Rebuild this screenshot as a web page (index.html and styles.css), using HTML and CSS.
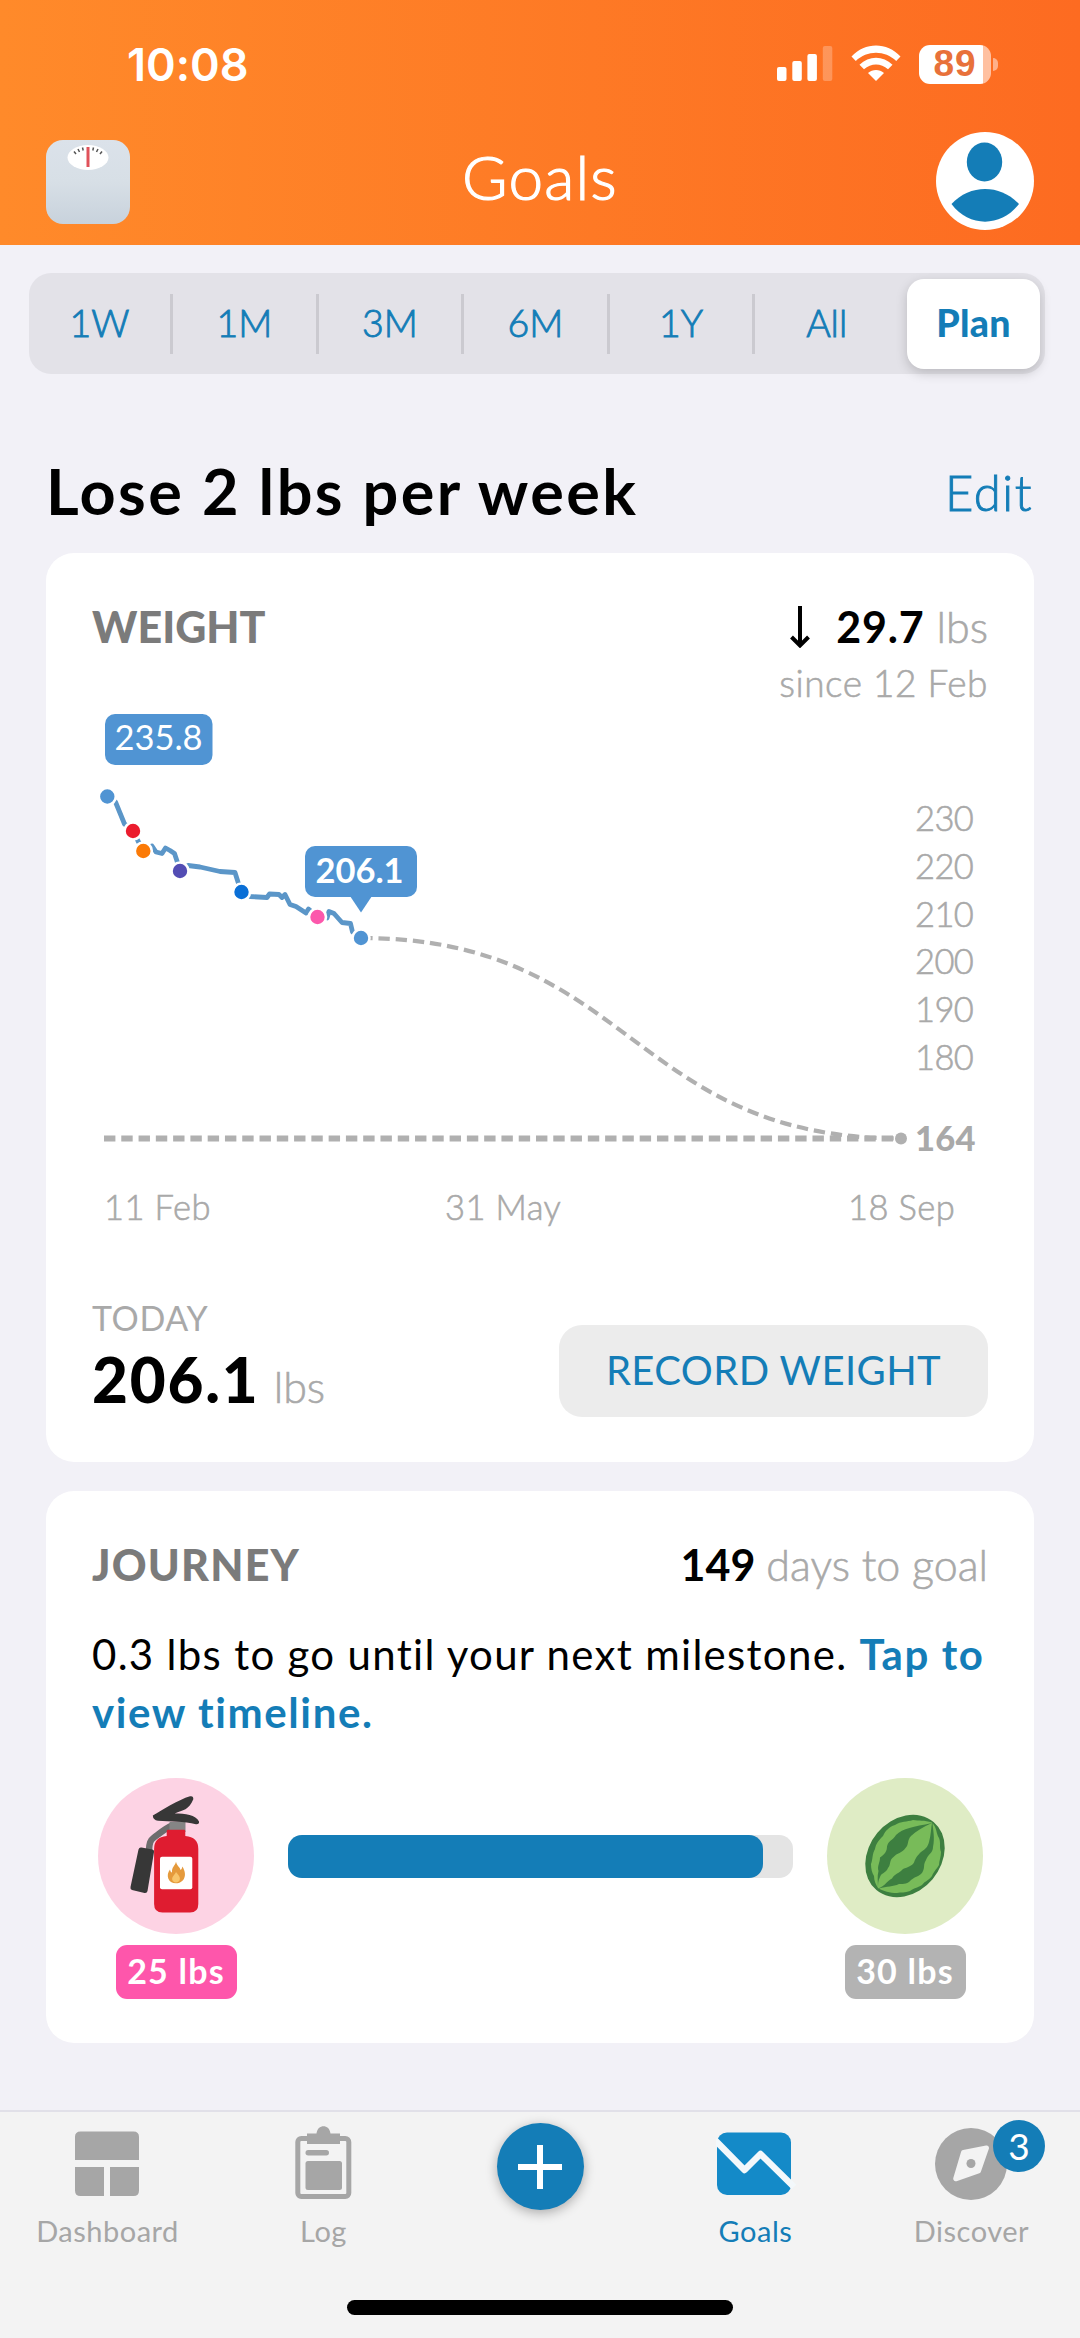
FILE: index.html
```html
<!DOCTYPE html>
<html lang="en">

<head>
    <meta charset="UTF-8">
    <meta name="viewport" content="width=device-width, initial-scale=1.0">
    <title>Goals</title>
    <link rel="stylesheet" href="styles.css">
</head>

<body>
    <header class="header">
        <div class="status-bar">
            <span class="time">10:08</span>
            <div class="status-icons">
                <svg class="signal" width="56" height="36" viewBox="0 0 56 36">
                    <rect x="0" y="21" width="9.5" height="14" rx="2" />
                    <rect x="15.3" y="15" width="9.5" height="20" rx="2" />
                    <rect x="30.4" y="8" width="9.5" height="27" rx="2" />
                    <rect x="45.8" y="0" width="9.5" height="35" rx="2" opacity="0.25" />
                </svg>
                <svg class="wifi" width="50" height="36" viewBox="0 0 50 36">
                    <path d="M0.5 11.5 C14 -3.3 36 -3.3 49.5 11.5 L45.2 16 C34 5 16 5 4.8 16 Z" />
                    <path d="M8.5 19.7 C18 10.5 32 10.5 41.5 19.7 L37 24.2 C30 17.8 20 17.8 13 24.2 Z" />
                    <path d="M17 28 C21.5 24 28.5 24 33 28 L25 36 Z" />
                </svg>
                <div class="battery">
                    <span class="battery-level">89</span>
                </div>
            </div>
        </div>
        <div class="title-bar">
            <svg class="scale-icon" width="84" height="84" viewBox="0 0 84 84">
                <defs>
                    <linearGradient id="scale-fill" x1="0" y1="0" x2="0" y2="1">
                        <stop offset="0" stop-color="#dbe2ea" />
                        <stop offset="0.5" stop-color="#d7dfe6" />
                        <stop offset="1" stop-color="#c8d2dc" />
                    </linearGradient>
                </defs>
                <rect width="84" height="84" rx="17" fill="url(#scale-fill)" />
                <ellipse cx="42" cy="17.5" rx="20.5" ry="12.5" fill="#fff" />
                <path d="M28 11.5l2 2.5M32 9l1.5 3M36.5 7.5l.7 3M47.5 7.5l-.7 3M52 9l-1.5 3M56 11.5l-2 2.5" stroke="#555" stroke-width="1.5" />
                <path d="M42 7V27" stroke="#e0525a" stroke-width="3" />
            </svg>
            <h1>Goals</h1>
            <svg class="avatar" width="98" height="98" viewBox="0 0 98 98">
                <circle cx="49" cy="49" r="49" fill="#fff" />
                <ellipse cx="48.5" cy="30" rx="17.7" ry="19.5" />
                <path d="M15.5 72 C34 52 64 52 83 72 C65 95.5 33 95.5 15.5 72 Z" />
            </svg>
        </div>
    </header>

    <nav class="range">
        <span>1W</span>
        <span>1M</span>
        <span>3M</span>
        <span>6M</span>
        <span>1Y</span>
        <span>All</span>
        <span class="selected">Plan</span>
    </nav>

    <main>
        <div class="goal">
            <h2>Lose 2 lbs per week</h2>
            <a class="edit">Edit</a>
        </div>

        <section class="card weight">
            <div class="card-top">
                <h3>WEIGHT</h3>
                <div class="change">
                    <svg width="20" height="42" viewBox="0 0 20 42">
                        <path d="M10 0V39M1.5 31L10 39.5L18.5 31" />
                    </svg>
                    <strong>29.7</strong>
                    <span>lbs</span>
                </div>
            </div>
            <p class="since">since 12 Feb</p>

            <svg class="chart" width="895" height="533" viewBox="93 707 895 533">
                <path class="target" d="M104 1138.5H901" />
                <path class="projection" d="M361 938C631 938 631 1138.5 901 1138.5" />
                <circle class="end" cx="901" cy="1138.5" r="6" />

                <path class="history" d="M107 796L115.5 802L124.5 824L133 830.5L138 841L143.3 850.4L152 846L156 852L162 853.5L165.5 848L170 850.5L174.5 853.5L177 861L180 870.5M180 870.5L188 865.5L200 867L220 871.5L235 872.5L238 882L241.5 891.5L250 896.5L267 897.5L269.5 894L279 894.5L282 897.5L285 894.5L290 904.5L296 906.5L306 913L308.5 909L317.5 916.5L327 918L329 911.5L334 913.5L342 922.5L350.5 923.5L352.5 932L361 937.5" />
                <g class="points">
                    <circle cx="107.3" cy="796.5" r="8.5" fill="#5094d3" />
                    <circle cx="133" cy="831" r="8.5" fill="#eb1c2e" />
                    <circle cx="143.3" cy="851" r="8.5" fill="#fb7a07" />
                    <circle cx="180" cy="871" r="8.5" fill="#534db4" />
                    <circle cx="241.5" cy="892" r="8.5" fill="#0a6fd6" />
                    <circle cx="317.5" cy="917" r="8.5" fill="#fc58ac" />
                    <circle cx="361" cy="938" r="8.5" fill="#5094d3" />
                </g>

                <rect class="tag" x="105" y="714" width="107.5" height="51" rx="10" />
                <text class="tag-text" x="158.5" y="750">235.8</text>
                <rect class="tag" x="305" y="846" width="112" height="51" rx="10" />
                <path class="tag" d="M350 896H372L361 912.5Z" />
                <text class="tag-text bold" x="359.5" y="882.5">206.1</text>

                <g class="axis">
                    <text x="915" y="831">230</text>
                    <text x="915" y="879">220</text>
                    <text x="915" y="927">210</text>
                    <text x="915" y="974">200</text>
                    <text x="915" y="1022">190</text>
                    <text x="915" y="1070">180</text>
                    <text class="bold" x="915" y="1150.5">164</text>
                    <text class="date" x="104" y="1219.5">11 Feb</text>
                    <text class="date" x="445" y="1219.5">31 May</text>
                    <text class="date" x="848" y="1219.5">18 Sep</text>
                </g>
            </svg>

            <div class="today">
                <div class="today-value">
                    <p>TODAY</p>
                    <div><strong>206.1</strong> <span>lbs</span></div>
                </div>
                <button class="record">RECORD WEIGHT</button>
            </div>
        </section>

        <section class="card journey">
            <div class="card-top">
                <h3>JOURNEY</h3>
                <div class="days"><strong>149</strong> <span>days to goal</span></div>
            </div>
            <p class="milestone">0.3 lbs to go until your next milestone. <a>Tap to<br>view timeline.</a></p>
            <div class="progress-row">
                <div class="badge">
                    <svg width="156" height="156" viewBox="0 0 156 156">
                        <circle cx="78" cy="78" r="78" fill="#fdd3e4" />
                        <path d="M80 47.5H74C68 50 62 55 56 59.5C52 62.5 51.5 65 51 72" fill="none" stroke="#6d6d6d" stroke-width="6.5" />
                        <rect x="71.5" y="44" width="16" height="10" fill="#858585" />
                        <path d="M68.7 58V53Q68.7 51.8 70 51.8H86Q87.3 51.8 87.3 53V58Q100.3 59 100.3 71V126Q100.3 134.5 92 134.5H64.5Q56.1 134.5 56.1 126V71Q56.1 59 68.7 58Z" fill="#df1c30" />
                        <rect x="62" y="78.7" width="32.3" height="32.6" rx="2" fill="#fff" />
                        <path d="M78 83.7C79 88 82 89 82.5 92C84 91 84 90 84.3 88.5C90 97 86 105.3 78 105.3C70 105.3 67.5 97 72 91.5C72.5 94 73 94 74 94.5C73.5 89 77 88 78 83.7Z" fill="#e59a3c" />
                        <path d="M78 94C80 97 83 99 81.5 102.5C80 105 76 105 74.5 102.5C73 99 77 97 78 94Z" fill="#f8c56c" />
                        <path d="M43.5 69.5L54.5 71.5Q56.5 72 56 74L49.5 113Q49 115.5 46.5 115L34 112Q32 111.5 32.5 109L40.5 71.5Q41.2 69 43.5 69.5Z" fill="#373737" />
                        <path d="M54.8 37.5C66 31 80 22 92 18.3Q95.5 17.5 95.3 21.2C91 32 85 32 76.7 35.5C87 35.5 98 37 101 43.5Q101.5 46.5 98 46.2C86 43 72 44 60 42.8Q55 42 54.8 37.5Z" fill="#373737" />
                    </svg>
                    <span class="chip pink">25 lbs</span>
                </div>
                <div class="bar">
                    <div class="bar-fill" style="width: 94%"></div>
                </div>
                <div class="badge">
                    <svg width="156" height="156" viewBox="0 0 156 156">
                        <circle cx="78" cy="78" r="78" fill="#dfecc5" />
                        <ellipse cx="78" cy="78" rx="44.5" ry="36" transform="rotate(-50 78 78)" fill="#3d7f40" />
                        <g fill="#78bb59">
                            <path d="M105 44.5C97 42 92 43 86 42C80 44 74 43 68 47C62 49 58 53 56 58C51 63 49 66 48 71C45 76 46 81 44 86C44 91 45 95 47 98C47 103 49 107 51 110C51 104 50 98 51.5 93C50 88 53 85 53 79.5C58 76 60 73 60 68.5C61 63 66 62 69 57C76 50 86 49 105 45Z" />
                            <path d="M105 45C96 49 89 53 84 58C80 62 82 67 78.5 70C75 75 70 75 66.5 79C62 82 64 87 61 90C59 95 54 95 53 99C51 103 51 106 51 110.5C58 108 60 103 65 100.5C68 95 72 96 76 91C81 89 85 88 87 84.5C89 79 91 77 94 74C99 71 101 68 102 64C104 57 104 50 105 45Z" />
                            <path d="M105.5 45C110 50 109 55 112 60C114 65 112 69 114 74C114 79 112 83 112 87C109 92 107 93 105 98C101 103 98 103 95 107C90 110 87 110 83 113C78 115 74 114 70 115C63 115 56 113 52 110.5C60 108 66 109 72 106C77 106 81 106 84 102C89 98 94 98 96 93C98 89 96 87 99 82C101 76 106 75 106 69C108 60 106 52 105.5 45Z" />
                        </g>
                    </svg>
                    <span class="chip gray">30 lbs</span>
                </div>
            </div>
        </section>
    </main>

    <footer class="tab-bar">
        <nav class="tabs">
            <div class="tab">
                <svg width="80" height="80" viewBox="0 0 80 80">
                    <path d="M7 40V17Q7 11.5 12.5 11.5H65.5Q71 11.5 71 17V40ZM7 47H36V76H12.5Q7 76 7 70.5ZM42 47H71V70.5Q71 76 65.5 76H42Z" />
                </svg>
                <span>Dashboard</span>
            </div>
            <div class="tab">
                <svg width="80" height="80" viewBox="0 0 80 80">
                    <rect x="13.8" y="18.5" width="51" height="58" rx="3.5" fill="none" stroke="currentColor" stroke-width="5" />
                    <path d="M23 13.5H32.5C33.5 3.7 45.5 3.7 46.5 13.5H56V24H23Z" />
                    <rect x="21.5" y="30" width="23.5" height="5.5" rx="2.7" />
                    <rect x="21.5" y="41" width="36.5" height="29" rx="2.5" />
                </svg>
                <span>Log</span>
            </div>
            <div class="tab">
                <button class="add">
                    <svg width="44" height="44" viewBox="0 0 44 44">
                        <path d="M22 0V44M0 22H44" stroke="#fff" stroke-width="6" />
                    </svg>
                </button>
            </div>
            <div class="tab active">
                <svg width="80" height="80" viewBox="0 0 80 80">
                    <rect x="1" y="12.5" width="74" height="62.5" rx="10" fill="#148ac8" />
                    <path d="M-1 20L28.5 50L44.5 34L78 67" fill="none" stroke="#f3f8fb" stroke-width="6.5" stroke-linejoin="round" />
                </svg>
                <span>Goals</span>
            </div>
            <div class="tab">
                <svg width="80" height="80" viewBox="0 0 80 80">
                    <circle cx="39" cy="44" r="36" />
                    <path d="M31.5 32.5L54.5 28L46.5 51L23.7 58.8Z" fill="#f3f3f3" stroke="#f3f3f3" stroke-width="5" stroke-linejoin="round" />
                    <circle cx="39" cy="43.5" r="4.5" />
                </svg>
                <span>Discover</span>
                <b class="count">3</b>
            </div>
        </nav>
        <div class="home-indicator"></div>
    </footer>
</body>

</html>
```

FILE: styles.css
```css
* {
    box-sizing: border-box;
}

body {
    margin: 0;
    width: 1080px;
    height: 2338px;
    display: flex;
    flex-direction: column;
    overflow: hidden;
    background-color: #f2f1f7;
    font-family: Lato, "Liberation Sans", sans-serif;
    font-variant-ligatures: none;
    color: #000;
}

h1,
h2,
h3,
p {
    margin: 0;
}

svg {
    display: block;
}

button {
    border: none;
    padding: 0;
    font-family: inherit;
}

/* header */

.header {
    height: 245px;
    flex: none;
    padding-top: 45px;
    background: linear-gradient(90deg, #ff8a2a, #fd6b21);
    color: #fff;
}

.status-bar {
    display: flex;
    justify-content: space-between;
    align-items: flex-start;
    height: 87px;
    padding: 0 82px 0 127px;
}

.time {
    font-family: Inter, sans-serif;
    font-size: 45px;
    font-weight: 600;
    line-height: 40px;
}

.status-icons {
    display: flex;
    fill: #fff;
}

.signal {
    margin: 1px 18px 0 0;
}

.wifi {
    margin: 0 18px 0 0;
}

.battery {
    position: relative;
    width: 72px;
    height: 39px;
    margin-right: 7px;
    border-radius: 11px;
    background: linear-gradient(90deg, #fff 64px, #ffc0a0 64px);
    text-align: center;
}

.battery::after {
    content: "";
    position: absolute;
    left: 74px;
    top: 13px;
    width: 5px;
    height: 13px;
    border-radius: 0 6px 6px 0;
    background-color: #ffb08a;
}

.battery-level {
    font-family: "Liberation Sans", sans-serif;
    font-size: 37px;
    font-weight: 700;
    letter-spacing: 1px;
    line-height: 38px;
    color: #e8713a;
}

.title-bar {
    display: grid;
    grid-template-columns: 1fr auto 1fr;
    align-items: center;
    height: 98px;
    padding: 0 46px;
}

.scale-icon {
    margin-top: 2px;
}

.title-bar h1 {
    padding-bottom: 11px;
    font-size: 62px;
    font-weight: 300;
    letter-spacing: 1.2px;
    line-height: 70px;
    -webkit-text-stroke: 1.2px #fff;
}

.avatar {
    justify-self: end;
    fill: #147db7;
}

/* time range */

.range {
    display: grid;
    grid-template-columns: 144px repeat(5, 145.6px) 1fr;
    align-items: center;
    flex: none;
    width: 1016px;
    height: 101px;
    margin: 28px 0 0 29px;
    border-radius: 22px;
    background-color: #e3e2e8;
    color: #147db7;
    font-size: 37.5px;
    font-weight: 300;
    line-height: 57px;
    text-align: center;
    -webkit-text-stroke: 0.9px #147db7;
}

.range span {
    height: 60px;
    border-right: 3px solid #cbcad0;
}

.range span:nth-child(6) {
    padding-right: 3px;
    border-right: none;
}

.range .selected {
    height: 90px;
    margin: 0 5px 0 6px;
    border: none;
    border-radius: 17px;
    background-color: #fff;
    box-shadow: 0 4px 12px rgba(0, 0, 0, 0.18);
    font-weight: 900;
    letter-spacing: 0.3px;
    line-height: 87px;
    -webkit-text-stroke: 0;
}

/* goal heading */

main {
    flex: 1;
    padding: 0 46px;
}

.goal {
    display: flex;
    justify-content: space-between;
    height: 80px;
    margin: 77px 1px 22px 0;
}

.goal h2 {
    font-size: 63px;
    font-weight: 700;
    letter-spacing: 2.4px;
    line-height: 80px;
}

.edit {
    color: #147db7;
    font-size: 49px;
    font-weight: 300;
    letter-spacing: 1.5px;
    line-height: 82px;
    -webkit-text-stroke: 0.9px #147db7;
}

/* cards */

.card {
    width: 988px;
    padding: 49px 46px 46px 46px;
    border-radius: 28px;
    background-color: #fff;
}

.card-top {
    display: flex;
    justify-content: space-between;
    height: 50px;
    font-size: 43px;
    line-height: 50px;
}

.card h3 {
    color: #7b7b7b;
    font-size: 43px;
    font-weight: 900;
}

.card-top span,
.since,
.today-value span {
    color: #a9a9a9;
    font-weight: 300;
    -webkit-text-stroke: 0.6px #a9a9a9;
}

.change {
    display: flex;
}

.change svg {
    margin: 4px 26px 0 0;
    fill: none;
    stroke: #000;
    stroke-width: 4;
}

.change strong {
    margin-right: 12px;
    letter-spacing: 0.8px;
}

.since {
    margin-top: 6px;
    font-size: 37px;
    letter-spacing: 0.5px;
    line-height: 50px;
    text-align: right;
}

/* chart */

.chart {
    margin: -1px 0 0 1px;
}

.chart path {
    fill: none;
}

.chart .target {
    stroke: #b0b0b0;
    stroke-width: 6;
    stroke-dasharray: 11.4 5.88;
}

.chart .projection {
    stroke: #b0b0b0;
    stroke-width: 4.2;
    stroke-dasharray: 11.4 5.88;
}

.chart .end {
    fill: #b0b0b0;
}

.chart .history {
    stroke: #5b96c8;
    stroke-width: 4.8;
    stroke-linejoin: round;
}

.points circle {
    stroke: #fff;
    stroke-width: 2.6;
}

.chart .tag {
    fill: #5094d3;
}

.tag-text {
    fill: #fff;
    font-size: 34.5px;
    text-anchor: middle;
}

.axis text {
    fill: #a9a9a9;
    font-size: 34.5px;
    font-weight: 300;
    letter-spacing: -0.6px;
    stroke: #a9a9a9;
    stroke-width: 0.6;
}

.axis .date {
    letter-spacing: 0.4px;
}

.chart .bold {
    font-weight: 700;
}

.axis .bold {
    font-weight: 900;
    letter-spacing: 0.3px;
    stroke: none;
}

.today {
    display: flex;
    justify-content: space-between;
    align-items: flex-end;
    margin-top: 58px;
}

.today-value {
    height: 119px;
}

.today-value p {
    margin-bottom: 6px;
    color: #a9a9a9;
    font-size: 34px;
    letter-spacing: 0.6px;
    line-height: 40px;
}

.today-value div {
    font-size: 43px;
    line-height: 70px;
}

.today-value strong {
    margin-right: 3px;
    font-size: 62px;
    font-weight: 900;
    letter-spacing: 1.8px;
}

.record {
    width: 429px;
    height: 92px;
    padding-bottom: 3px;
    border-radius: 23px;
    background-color: #ececec;
    color: #147db7;
    font-size: 40px;
    letter-spacing: 0.4px;
}

.weight {
    padding-bottom: 45px;
}

/* journey */

.journey {
    margin-top: 29px;
    padding-bottom: 44px;
}

.journey h3 {
    letter-spacing: 1.2px;
}

.milestone {
    margin-top: 35px;
    font-size: 42px;
    letter-spacing: 1.3px;
    line-height: 58px;
    white-space: nowrap;
}

.milestone a {
    color: #147db7;
    font-weight: 700;
    letter-spacing: 1.6px;
}

.progress-row {
    display: flex;
    gap: 34px;
    margin-top: 37px;
    padding: 0 5px 0 6px;
}

.badge {
    display: flex;
    flex-direction: column;
    align-items: center;
}

.chip {
    width: 121px;
    height: 54px;
    margin-top: 11px;
    border-radius: 11px;
    color: #fff;
    font-size: 34px;
    font-weight: 700;
    letter-spacing: 1.2px;
    line-height: 52px;
    text-align: center;
}

.pink {
    background-color: #fe56ab;
}

.gray {
    background-color: #b3b3b3;
}

.bar {
    flex: 1;
    height: 43px;
    margin-top: 57px;
    border-radius: 14px;
    background-color: #e4e4e4;
}

.bar-fill {
    height: 100%;
    border-radius: 14px;
    background-color: #147db7;
}

/* bottom tabs */

.tab-bar {
    flex: none;
    height: 228px;
    border-top: 2px solid #e1e0e8;
    background-color: #f3f3f3;
}

.tabs {
    display: grid;
    grid-template-columns: repeat(5, 216px);
    height: 188px;
    padding-top: 8px;
}

.tab {
    position: relative;
    display: flex;
    flex-direction: column;
    align-items: center;
    color: #a6a6a6;
    fill: #a6a6a6;
    font-size: 29px;
    letter-spacing: 0.5px;
    line-height: 34px;
}

.tab > span {
    margin: 14px 1px 0 0;
}

.active {
    color: #147db7;
}

.add {
    display: flex;
    justify-content: center;
    align-items: center;
    width: 87px;
    height: 87px;
    margin-top: 3px;
    border-radius: 50%;
    background-color: #147db7;
    box-shadow: 0 3px 12px rgba(0, 0, 0, 0.3);
}

.count {
    position: absolute;
    left: 129px;
    top: 0;
    width: 52px;
    height: 52px;
    border-radius: 50%;
    background-color: #147db7;
    color: #fff;
    font-size: 37px;
    font-weight: 400;
    letter-spacing: 0;
    line-height: 51px;
    text-align: center;
}

.home-indicator {
    width: 386px;
    height: 15px;
    margin: 0 auto;
    border-radius: 8px;
    background-color: #000;
}
```
